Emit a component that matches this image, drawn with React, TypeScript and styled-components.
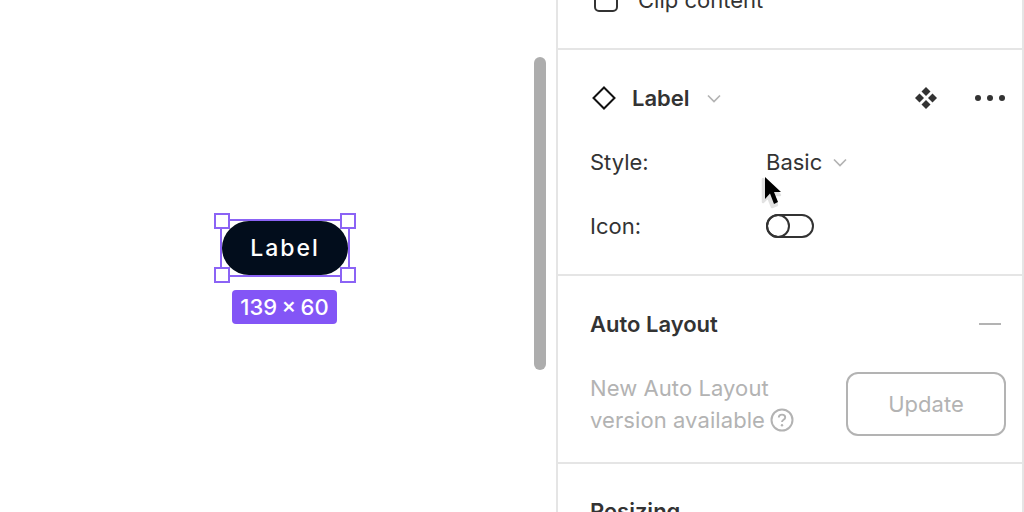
import React from "react";
import styled, { createGlobalStyle } from "styled-components";

const GlobalStyle = createGlobalStyle`
  html, body {
    margin: 0;
    padding: 0;
    background: #fff;
  }
  *, *::before, *::after {
    box-sizing: border-box;
  }
`;

const Page = styled.div`
  position: relative;
  display: flex;
  width: 1024px;
  height: 512px;
  overflow: hidden;
  background: #fff;
  font-family: Inter, "Liberation Sans", sans-serif;
  color: #333;
`;

const Canvas = styled.div`
  position: relative;
  flex: 0 0 556px;
  height: 100%;
`;

const Scrollbar = styled.div`
  position: absolute;
  left: 534px;
  top: 57px;
  width: 12px;
  height: 313px;
  border-radius: 6px;
  background: #adadad;
`;

const Selection = styled.div`
  position: absolute;
  left: 220px;
  top: 219px;
  width: 130px;
  height: 58px;
  border: 2px solid #8b63f5;
`;

const Handle = styled.span<{ $right?: boolean; $bottom?: boolean }>`
  position: absolute;
  width: 16px;
  height: 16px;
  background: #fff;
  border: 2px solid #8b63f5;
  ${(p) => (p.$right ? "right: -8px;" : "left: -8px;")}
  ${(p) => (p.$bottom ? "bottom: -8px;" : "top: -8px;")}
`;

const Pill = styled.div`
  display: flex;
  align-items: center;
  justify-content: center;
  width: 126px;
  height: 54px;
  border-radius: 27px;
  background: #020d1c;
  color: #fff;
  font-size: 23px;
  font-weight: 500;
  letter-spacing: 2px;
`;

const SizeTag = styled.div`
  position: absolute;
  left: 232px;
  top: 290px;
  width: 105px;
  height: 34px;
  display: flex;
  align-items: center;
  justify-content: center;
  border-radius: 4px;
  background: #8355f6;
  color: #fff;
  font-size: 22px;
  font-weight: 500;
  word-spacing: -1.5px;
`;

const Panel = styled.aside`
  flex: 1;
  height: 100%;
  border-left: 2px solid #e5e5e5;
  border-right: 2px solid #e5e5e5;
  display: flex;
  flex-direction: column;
`;

const Section = styled.section`
  flex: none;
  padding: 0 16px 0 32px;
  border-bottom: 2px solid #e5e5e5;
`;

const ClipSection = styled(Section)`
  height: 50px;
  padding-left: 36px;
`;

const ClipRow = styled.div`
  display: flex;
  align-items: center;
  gap: 20px;
  margin-top: -12px;
  height: 24px;
  font-size: 22px;
  line-height: 24px;
`;

const Checkbox = styled.span`
  width: 24px;
  height: 24px;
  border: 2px solid #333;
  border-radius: 5px;
`;

const ComponentSection = styled(Section)`
  height: 226px;
  padding-top: 33px;
`;

const ComponentHead = styled.div`
  display: flex;
  align-items: center;
  height: 30px;
  margin-bottom: 33px;
`;

const ComponentGlyph = styled.span`
  display: flex;
  margin-left: 2px;
`;

const ComponentName = styled.span`
  margin-left: 16px;
  font-size: 22px;
  font-weight: 600;
  line-height: 30px;
`;

const HeadChevron = styled.span`
  display: flex;
  margin-left: 17px;
  margin-right: auto;
`;

const HeadActions = styled.div`
  display: flex;
  align-items: center;
  gap: 36px;
`;

const PropRow = styled.div`
  display: grid;
  grid-template-columns: 176px 1fr;
  align-items: center;
  height: 32px;
  margin-bottom: 32px;
  font-size: 22px;
`;

const PropValue = styled.div`
  display: flex;
  align-items: center;
  gap: 11px;
`;

const Toggle = styled.span`
  position: relative;
  display: block;
  width: 48px;
  height: 24px;
  border: 2px solid #333;
  border-radius: 12px;
  &::after {
    content: "";
    position: absolute;
    left: -2px;
    top: -2px;
    width: 24px;
    height: 24px;
    border: 2px solid #333;
    border-radius: 50%;
  }
`;

const LayoutSection = styled(Section)`
  height: 188px;
  padding-top: 33px;
`;

const SectionHead = styled.div`
  display: flex;
  align-items: center;
  justify-content: space-between;
  height: 30px;
  font-size: 22px;
  font-weight: 600;
  line-height: 30px;
`;

const Minus = styled.span`
  width: 22px;
  height: 2px;
  margin-right: 5px;
  background: #b3b3b3;
`;

const UpdateRow = styled.div`
  display: flex;
  align-items: flex-start;
  justify-content: space-between;
  margin-top: 33px;
`;

const Hint = styled.div`
  color: #b3b3b3;
  font-size: 22px;
  line-height: 32px;
  letter-spacing: 0.08px;
`;

const HintLine = styled.div`
  display: flex;
  align-items: center;
  gap: 5px;
`;

const UpdateButton = styled.button`
  width: 160px;
  height: 64px;
  border: 2px solid #b3b3b3;
  border-radius: 12px;
  background: #fff;
  color: #b3b3b3;
  font-family: inherit;
  font-size: 22px;
  padding: 0;
`;

const ResizeSection = styled.section`
  padding: 32px 32px 0;
  font-size: 22px;
  font-weight: 600;
  line-height: 30px;
`;

const Cursor = styled.svg`
  position: absolute;
  left: 758px;
  top: 172px;
`;

const Chevron = () => (
  <svg width="14" height="9" viewBox="0 0 14 9" fill="none">
    <path d="M1 1.5 7 7.5 13 1.5" stroke="#b3b3b3" strokeWidth="1.7" />
  </svg>
);

const ComponentIcon = () => (
  <svg width="24" height="24" viewBox="0 0 24 24" fill="none">
    <path d="M12 1.5 22.5 12 12 22.5 1.5 12Z" stroke="#111" strokeWidth="2" />
  </svg>
);

const InstanceIcon = () => (
  <svg width="24" height="24" viewBox="0 0 24 24" fill="#333">
    <path d="M12 1 16.5 5.5 12 10 7.5 5.5Z" />
    <path d="M12 14 16.5 18.5 12 23 7.5 18.5Z" />
    <path d="M5.5 7.5 10 12 5.5 16.5 1 12Z" />
    <path d="M18.5 7.5 23 12 18.5 16.5 14 12Z" />
  </svg>
);

const MoreIcon = () => (
  <svg width="32" height="8" viewBox="0 0 32 8" fill="#333">
    <circle cx="4" cy="4" r="3" />
    <circle cx="16" cy="4" r="3" />
    <circle cx="28" cy="4" r="3" />
  </svg>
);

const HelpIcon = () => (
  <svg width="24" height="24" viewBox="0 0 24 24" fill="none">
    <circle cx="12" cy="12" r="10.5" stroke="#b3b3b3" strokeWidth="2" />
    <path
      d="M8.8 9.6c0-1.8 1.4-3 3.2-3s3.2 1.2 3.2 2.8c0 2.4-3.2 2.4-3.2 4.6"
      stroke="#b3b3b3"
      strokeWidth="1.9"
    />
    <circle cx="12" cy="17.2" r="1.2" fill="#b3b3b3" />
  </svg>
);

export default function App() {
  return (
    <>
      <GlobalStyle />
      <Page>
        <Canvas>
          <Selection>
            <Pill>Label</Pill>
            <Handle />
            <Handle $right />
            <Handle $bottom />
            <Handle $right $bottom />
          </Selection>
          <SizeTag>139 × 60</SizeTag>
          <Scrollbar />
        </Canvas>
        <Panel>
          <ClipSection>
            <ClipRow>
              <Checkbox />
              <span>Clip content</span>
            </ClipRow>
          </ClipSection>
          <ComponentSection>
            <ComponentHead>
              <ComponentGlyph>
                <ComponentIcon />
              </ComponentGlyph>
              <ComponentName>Label</ComponentName>
              <HeadChevron>
                <Chevron />
              </HeadChevron>
              <HeadActions>
                <InstanceIcon />
                <MoreIcon />
              </HeadActions>
            </ComponentHead>
            <PropRow>
              <span>Style:</span>
              <PropValue>
                <span>Basic</span>
                <Chevron />
              </PropValue>
            </PropRow>
            <PropRow>
              <span>Icon:</span>
              <PropValue>
                <Toggle />
              </PropValue>
            </PropRow>
          </ComponentSection>
          <LayoutSection>
            <SectionHead>
              <span>Auto Layout</span>
              <Minus />
            </SectionHead>
            <UpdateRow>
              <Hint>
                <div>New Auto Layout</div>
                <HintLine>
                  <span>version available</span>
                  <HelpIcon />
                </HintLine>
              </Hint>
              <UpdateButton>Update</UpdateButton>
            </UpdateRow>
          </LayoutSection>
          <ResizeSection>Resizing</ResizeSection>
        </Panel>
        <Cursor width="28" height="38" viewBox="0 0 28 38">
          <path
            d="M6 6 6 29 11 24 15 34 20 32 17 22 23 22Z"
            fill="#e2e2e2"
            stroke="#e2e2e2"
            strokeWidth="2.5"
            strokeLinejoin="round"
            transform="translate(-1 1)"
          />
          <path d="M7 5 7 27 12 21.5 16 32 20 30 16 20 23 20Z" fill="#000" />
        </Cursor>
      </Page>
    </>
  );
}
